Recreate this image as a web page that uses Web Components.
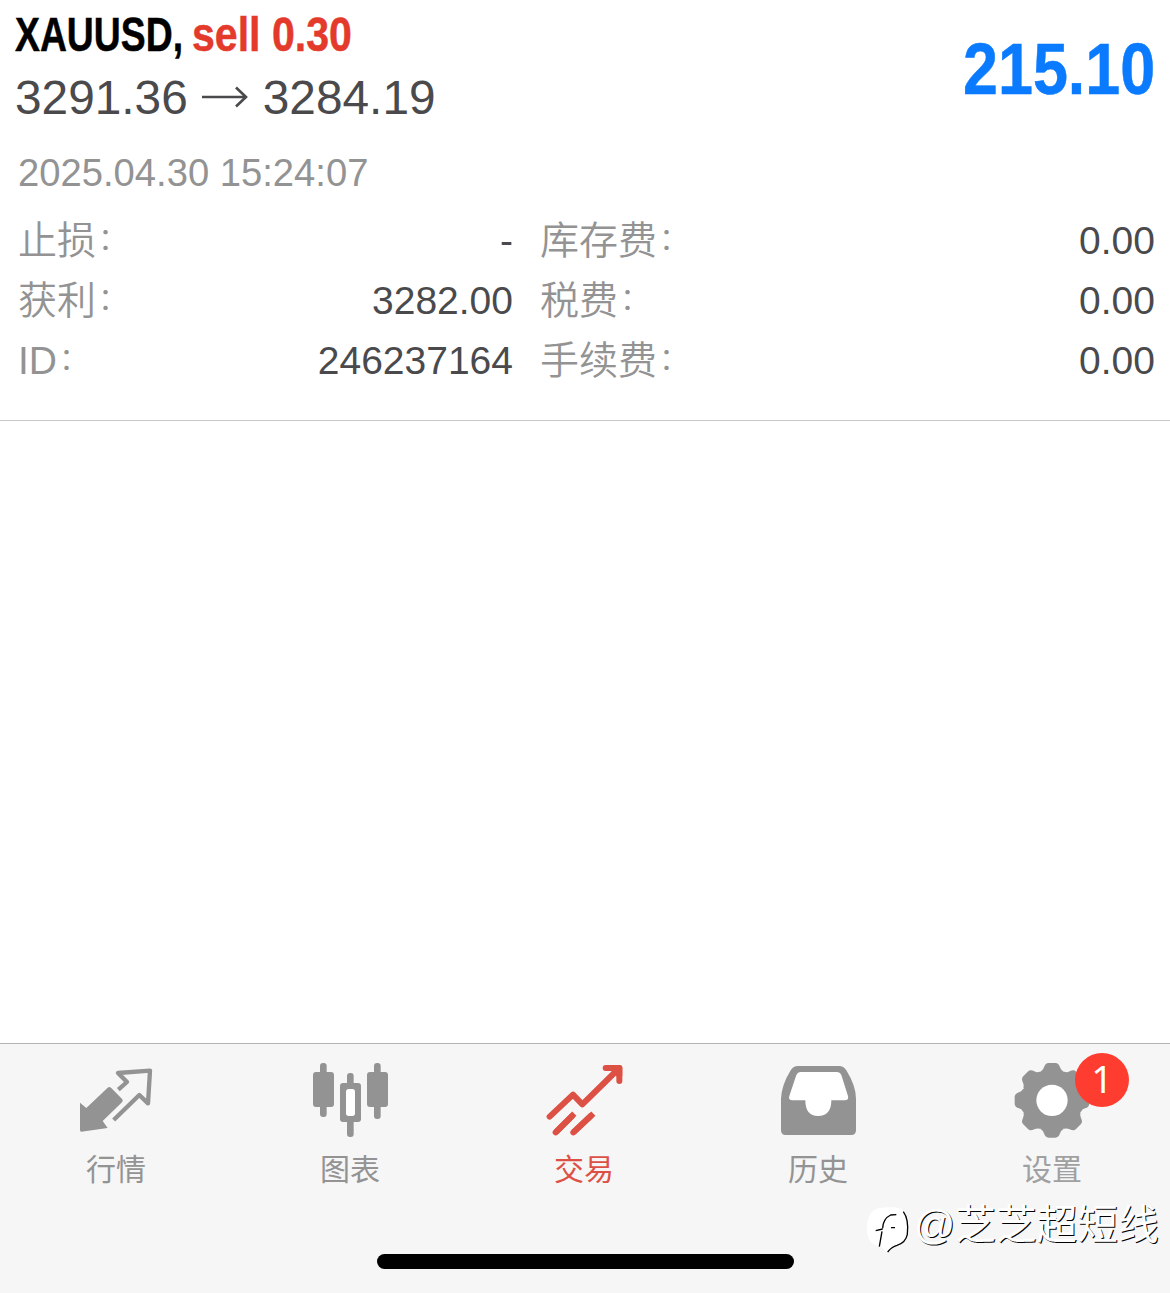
<!DOCTYPE html>
<html lang="zh-CN">
<head>
<meta charset="utf-8">
<title>交易</title>
<style>
    html, body {
        margin: 0;
        padding: 0;
    }

    body {
        background: #fff;
        font-family: "Liberation Sans", "Noto Sans CJK SC", sans-serif;
        height: 1293px;
        overflow: hidden;
    }
</style>
</head>
<body>
<trade-screen>
    <position-card symbol="XAUUSD," side="sell 0.30" open="3291.36" current="3284.19" profit="215.10" time="2025.04.30 15:24:07">
        <detail-row label="止损" value="-"></detail-row>
        <detail-row label="库存费" value="0.00"></detail-row>
        <detail-row label="获利" value="3282.00"></detail-row>
        <detail-row label="税费" value="0.00"></detail-row>
        <detail-row label="ID" value="246237164"></detail-row>
        <detail-row label="手续费" value="0.00"></detail-row>
    </position-card>
    <tab-bar slot="footer">
        <tab-item label="行情">
            <svg width="120" height="96" viewBox="-9 12 360 288">
                <path d="M60 188 L79 204 L143 143 Q148 139 153 143 L187 178 Q190 182 186 187 L128 243 L143 264 L64 275 Q60 275 60 270 Z" fill="#939393"/>
                <path d="M175 149 L201 126 L174 99 L270 92 L264 190 L238 165 L161 240" fill="none" stroke="#939393" stroke-width="13" stroke-linejoin="round"/>
            </svg>
        </tab-item>
        <tab-item label="图表">
            <svg width="120" height="96" viewBox="3 12 360 288" fill="#939393">
                <rect x="90" y="69" width="20" height="162" rx="9"/>
                <rect x="69" y="96" width="63" height="105" rx="9"/>
                <rect x="171" y="99" width="20" height="192" rx="9"/>
                <rect x="150" y="129" width="63" height="117" rx="9"/>
                <rect x="168" y="147" width="27" height="81" rx="8" fill="#fff"/>
                <rect x="252" y="69" width="20" height="168" rx="9"/>
                <rect x="231" y="96" width="63" height="105" rx="9"/>
            </svg>
        </tab-item>
        <tab-item label="交易" active>
            <svg width="120" height="96" viewBox="0 12 360 288" fill="none" stroke="#dd5145" stroke-width="18" stroke-linecap="round" stroke-linejoin="round">
                <path d="M74 230 L144 164 L172 193 L280 87"/>
                <path d="M242 84 L283 84 L283 123"/>
                <path d="M262 84 L283 84 L283 105 Z" fill="#dd5145"/>
                <path d="M92 277 L148 221" stroke-linecap="butt"/>
                <path d="M145 277 L205 221" stroke-linecap="butt"/>
                <path d="M92 277 L140 229 M145 277 L197 228"/>
            </svg>
        </tab-item>
        <tab-item label="历史">
            <svg width="120" height="96" viewBox="-3 12 360 288">
                <path d="M114 78 L237 78 Q251 78 259 91 Q288 138 288 176 L288 271 Q288 285 274 285 L77 285 Q63 285 63 271 L63 176 Q65 135 92 91 Q100 78 114 78 Z" fill="#939393"/>
                <path d="M121 96 L230 96 Q240 96 244 105 L264 168 Q267 181 254 181 L214 181 Q214 228 174 228 Q136 228 136 181 L98 181 Q84 181 88 168 L109 105 Q113 96 121 96 Z" fill="#fff"/>
            </svg>
        </tab-item>
        <tab-item label="设置" badge="1" muted>
            <svg width="120" height="96" viewBox="-21 12 360 288" fill="#939393">
                <defs>
                    <path id="tooth" d="M-38 -76 L-34 -87 Q-27 -90 -24 -99 Q-20 -112 -10 -112 L10 -112 Q20 -112 24 -99 Q27 -90 34 -87 L38 -76 Z"/>
                </defs>
                <g transform="translate(156 181)">
                    <circle r="90"/>
                    <use href="#tooth"/>
                    <use href="#tooth" transform="rotate(45)"/>
                    <use href="#tooth" transform="rotate(90)"/>
                    <use href="#tooth" transform="rotate(135)"/>
                    <use href="#tooth" transform="rotate(180)"/>
                    <use href="#tooth" transform="rotate(225)"/>
                    <use href="#tooth" transform="rotate(270)"/>
                    <use href="#tooth" transform="rotate(315)"/>
                    <circle r="47" fill="#fff"/>
                </g>
            </svg>
        </tab-item>
    </tab-bar>
    <author-mark slot="overlay" name="@芝芝超短线"></author-mark>
</trade-screen>

<script>
// full height screen: content on top, tab bar at the bottom
class TradeScreen extends HTMLElement {
    constructor () {
        super ();
        this.attachShadow ({ mode: "open" }).innerHTML =
        `
        <style>
        :host {
            display: flex;
            flex-direction: column;
            height: 1293px;
            position: relative;
        }

        main {
            flex: 1;
        }
        </style>
        <main><slot></slot></main>
        <slot name="footer"></slot>
        <slot name="overlay"></slot>
        `;
    }
}

// one open position, the details go into the default slot
class PositionCard extends HTMLElement {
    connectedCallback () {
        const get = (name) => this.getAttribute (name);
        this.attachShadow ({ mode: "open" }).innerHTML =
        `
        <style>
        :host {
            display: block;
            box-sizing: border-box;
            height: 421px;
            border-bottom: 1px solid #c8c8c8;
            padding: 8px 15px 0;
        }

        header {
            display: flex;
            justify-content: space-between;
            height: 132px;
        }

        .title {
            display: flex;
            gap: 9px;
            height: 54px;
            line-height: 54px;
            font-size: 48px;
            font-weight: bold;
            -webkit-text-stroke: 0.5px;
        }

        .side {
            color: #e33a2c;
        }

        .prices {
            display: flex;
            align-items: center;
            height: 72px;
            color: #4a4a4d;
            font-size: 47.8px;
            line-height: 72px;
        }

        .prices svg {
            margin: 0 14px 2px 13px;
        }

        .profit {
            color: #0a7aff;
            font-size: 73px;
            font-weight: bold;
            line-height: 121px;
            -webkit-text-stroke: 0.5px;
        }

        time {
            display: block;
            padding-left: 3px;
            height: 71px;
            line-height: 66px;
            font-size: 38.2px;
            color: #939393;
        }

        .details {
            display: grid;
            grid-template-columns: 494px 614px;
            column-gap: 28px;
            padding-left: 4px;
        }
        </style>
        <header>
            <div>
                <div class="title">
                    <fit-text text="${get ("symbol")}" width="168"></fit-text>
                    <fit-text class="side" text="${get ("side")}" width="160"></fit-text>
                </div>
                <div class="prices">
                    <span>${get ("open")}</span>
                    <svg width="48" height="24" viewBox="0 0 48 24" fill="none" stroke="#4a4a4d" stroke-width="2.6">
                        <path d="M1 12 H45 M35 2.5 L45 12 L35 21.5"/>
                    </svg>
                    <span>${get ("current")}</span>
                </div>
            </div>
            <fit-text class="profit" text="${get ("profit")}" width="192"></fit-text>
        </header>
        <time>${get ("time")}</time>
        <div class="details"><slot></slot></div>
        `;
    }
}

// label on the left, value on the right
class DetailRow extends HTMLElement {
    connectedCallback () {
        this.attachShadow ({ mode: "open" }).innerHTML =
        `
        <style>
        :host {
            display: flex;
            justify-content: space-between;
            height: 60px;
            line-height: 60px;
            font-size: 39px;
        }

        .label {
            display: flex;
            align-items: baseline;
            margin-left: -1px;
            color: #939393;
            font-weight: 350;
        }

        /* the full-width colon sits low in its cell, lift it to the middle */
        .colon {
            position: relative;
            top: -5px;
            left: 2px;
            font-size: 30px;
        }

        .value {
            color: #4a4a4d;
        }
        </style>
        <span class="label">${this.getAttribute ("label")}<span class="colon">：</span></span>
        <span class="value">${this.getAttribute ("value")}</span>
        `;
    }
}

class TabBar extends HTMLElement {
    constructor () {
        super ();
        this.attachShadow ({ mode: "open" }).innerHTML =
        `
        <style>
        :host {
            display: flex;
            flex-direction: column;
            align-items: center;
            box-sizing: border-box;
            height: 250px;
            border-top: 1px solid #b2b2b2;
            background: #f6f6f6;
        }

        nav {
            display: grid;
            grid-template-columns: repeat(5, 1fr);
            width: 100%;
            height: 210px;
        }

        .home {
            width: 417px;
            height: 15px;
            border-radius: 8px;
            background: #000;
        }
        </style>
        <nav><slot></slot></nav>
        <div class="home"></div>
        `;
    }
}

// icon in the default slot, optional badge over it
class TabItem extends HTMLElement {
    connectedCallback () {
        const badge = this.getAttribute ("badge");
        this.attachShadow ({ mode: "open" }).innerHTML =
        `
        <style>
        :host {
            display: flex;
            flex-direction: column;
            align-items: center;
            position: relative;
            color: #939393;
        }

        :host([active]) {
            color: #dd5145;
        }

        :host([muted]) {
            color: #a0a0a0;
        }

        .label {
            height: 60px;
            line-height: 60px;
            margin-right: 2px;
            font-size: 30px;
        }

        .badge {
            position: absolute;
            left: 139px;
            top: 9px;
            width: 54px;
            height: 54px;
            border-radius: 50%;
            background: #fe3c30;
            color: #fff;
            font-family: "Noto Sans", sans-serif;
            font-size: 38px;
            line-height: 51px;
            text-align: center;
        }
        </style>
        <slot></slot>
        <span class="label">${this.getAttribute ("label")}</span>
        ${badge ? `<span class="badge">${badge}</span>` : ""}
        `;
    }
}

// white mark with a hard dark edge, lies over the tab bar
class AuthorMark extends HTMLElement {
    connectedCallback () {
        this.attachShadow ({ mode: "open" }).innerHTML =
        `
        <style>
        :host {
            display: flex;
            align-items: center;
            position: absolute;
            right: 11px;
            bottom: 38px;
            height: 60px;
            color: #fff;
            font-size: 40.5px;
            line-height: 60px;
            text-shadow: 1px 1px 0 #000;
        }

        svg {
            margin: 12px 0 0 0;
        }
        </style>
        <svg width="47" height="50" viewBox="54 50 141 150">
            <path d="M92 56 Q150 48 166 66 Q184 90 178 135 Q172 166 130 172 L112 190 L100 174 Q54 168 54 118 Q54 62 92 56 Z" fill="#fff"/>
            <path d="M163 67 Q180 90 175 135 Q170 160 144 168 Q128 172 116 188 M91 172 L99 126 M80 124 L101 119 M101 117 Q102 88 125 77 L142 76 M126 115 L138 115" fill="none" stroke="#000" stroke-width="4"/>
        </svg>
        <fit-text text="${this.getAttribute ("name")}" width="245"></fit-text>
        `;
    }
}

// squeezes a line of text to the given width
class FitText extends HTMLElement {
    connectedCallback () {
        const width = Number (this.getAttribute ("width"));
        this.attachShadow ({ mode: "open" }).innerHTML =
        `
        <style>
        :host {
            display: block;
            width: ${width}px;
            white-space: nowrap;
        }

        span {
            display: inline-block;
            transform-origin: 0 50%;
        }
        </style>
        <span>${this.getAttribute ("text")}</span>
        `;
        const span = this.shadowRoot.querySelector ("span");
        span.style.transform = `scaleX(${width / span.offsetWidth})`;
    }
}

customElements.define ("trade-screen", TradeScreen);
customElements.define ("position-card", PositionCard);
customElements.define ("detail-row", DetailRow);
customElements.define ("tab-bar", TabBar);
customElements.define ("tab-item", TabItem);
customElements.define ("author-mark", AuthorMark);
customElements.define ("fit-text", FitText);
</script>
</body>
</html>
